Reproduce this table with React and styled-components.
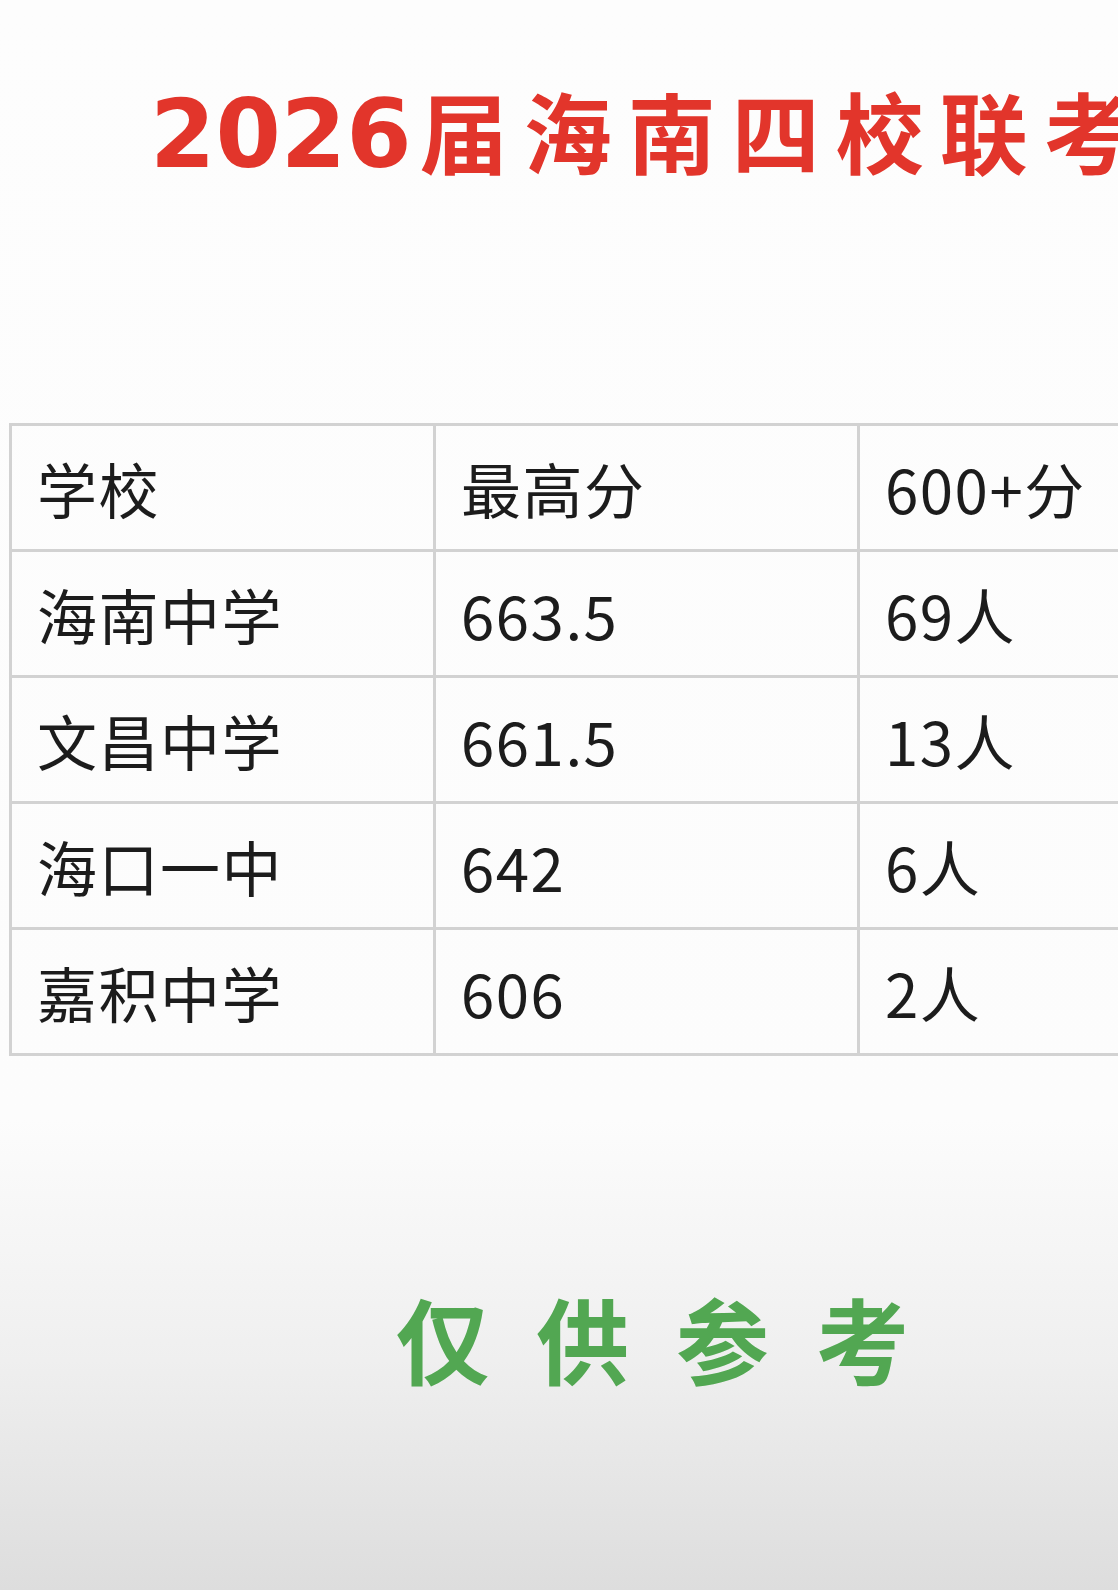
import React from 'react';
import styled, { createGlobalStyle } from 'styled-components';

const GlobalStyle = createGlobalStyle`
    html, body {
        margin: 0;
        padding: 0;
    }
    body {
        font-family: "Noto Sans CJK SC", "Noto Sans", sans-serif;
        overflow: hidden;
    }
`;

const Page = styled.div`
    width: 1118px;
    height: 1590px;
    overflow: hidden;
    background: linear-gradient(
        to bottom,
        #fdfdfd 0px,
        #fcfcfc 1120px,
        #efefef 1360px,
        #dddddd 1590px
    );
    display: flex;
    flex-direction: column;
`;

const Title = styled.h1`
    margin: 85px 0 0 0;
    padding-left: 150px;
    font-size: 88px;
    line-height: 1;
    font-weight: 700;
    letter-spacing: 16px;
    color: #e2352b;
    white-space: nowrap;
`;

const Year = styled.span`
    font-family: "DejaVu Sans", sans-serif;
    font-size: 94px;
    letter-spacing: 0;
    margin-right: 8px;
`;

const TableWrap = styled.div`
    margin-top: 241px;
    padding-left: 9px;
    overflow: hidden;
`;

const Table = styled.table`
    border-collapse: collapse;
    table-layout: fixed;
    width: 1272px;
`;

const Cell = styled.td`
    width: 424px;
    height: 126px;
    padding: 0 0 0 25px;
    border: 3px solid #d2d2d2;
    font-size: 60px;
    font-weight: 400;
    letter-spacing: 1.5px;
    color: #1c1c1c;
    vertical-align: middle;
    white-space: nowrap;
    box-sizing: border-box;
`;

const Note = styled.div`
    margin-top: 235px;
    padding-left: 396px;
    font-size: 93px;
    line-height: 1;
    font-weight: 700;
    letter-spacing: 47px;
    color: #52a752;
    white-space: nowrap;
`;

const rows = [
    ['学校', '最高分', '600+分'],
    ['海南中学', '663.5', '69人'],
    ['文昌中学', '661.5', '13人'],
    ['海口一中', '642', '6人'],
    ['嘉积中学', '606', '2人'],
];

export default function App() {
    return (
        <>
            <GlobalStyle />
            <Page>
                <Title><Year>2026</Year>届海南四校联考</Title>
                <TableWrap>
                    <Table>
                        <tbody>
                            {rows.map((r) => (
                                <tr key={r[0]}>
                                    {r.map((c) => <Cell key={c}>{c}</Cell>)}
                                </tr>
                            ))}
                        </tbody>
                    </Table>
                </TableWrap>
                <Note>仅供参考</Note>
            </Page>
        </>
    );
}
